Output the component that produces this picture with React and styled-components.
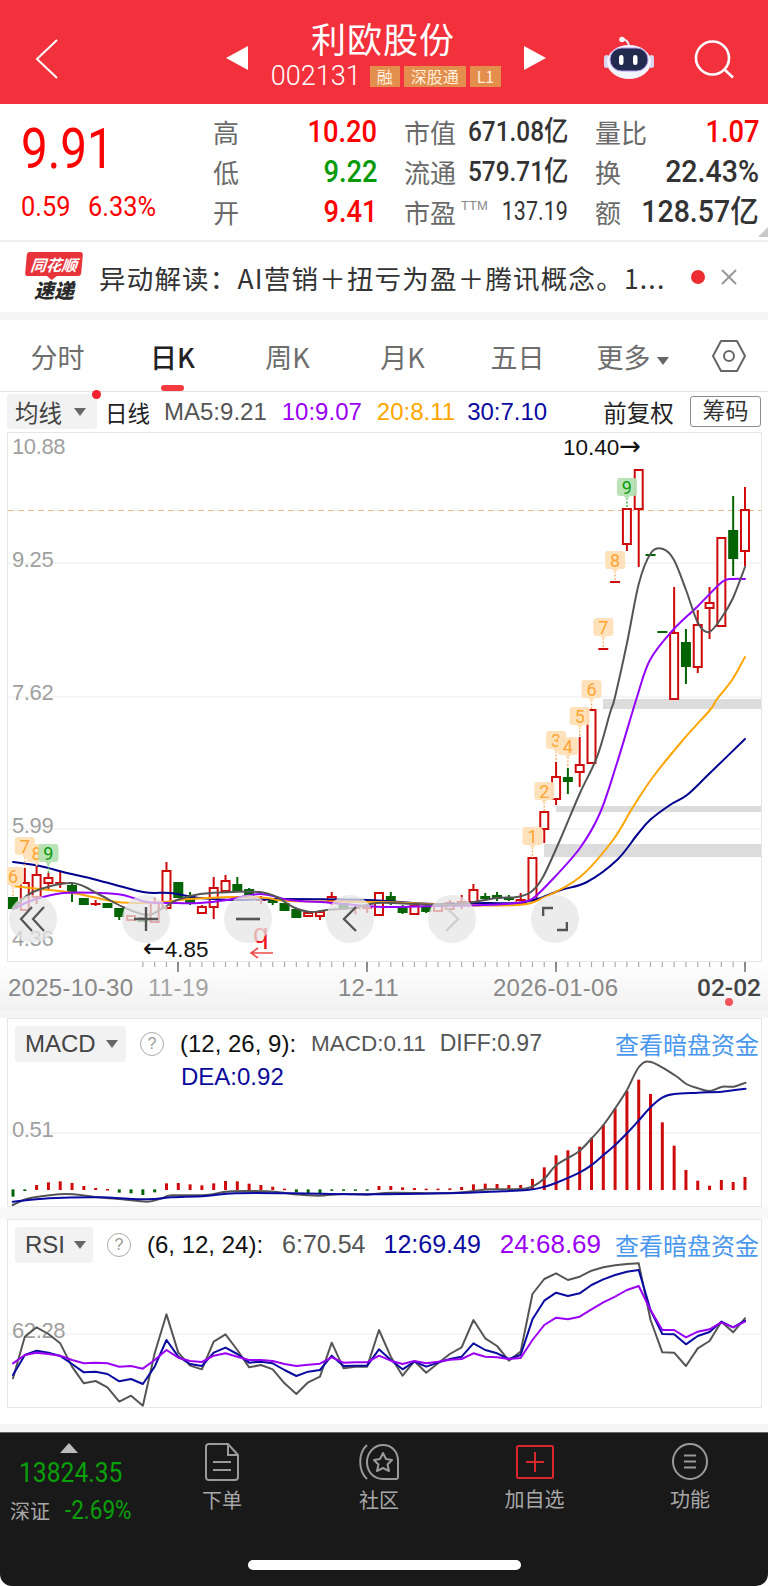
import React from "react";
import styled, { createGlobalStyle } from "styled-components";

const SANS = `"Liberation Sans", "Noto Sans CJK SC", sans-serif`;
const CJK = `"Noto Sans CJK SC", "Liberation Sans", sans-serif`;
const NARROW = `"Roboto", "Noto Sans CJK SC", sans-serif`;
const RED = "#fe0000";
const CANDLE_RED = "#cf0a0a";
const CANDLE_GREEN = "#046404";

const GlobalStyle = createGlobalStyle`
  html, body { margin: 0; padding: 0; background: #fff; }
  * { box-sizing: border-box; }
`;

const Page = styled.div`
  width: 768px;
  height: 1586px;
  display: flex;
  flex-direction: column;
  background: #fff;
  font-family: ${CJK};
  overflow: hidden;
`;

/* header */
const Header = styled.header`
  height: 104px;
  flex: none;
  background: #f2313c;
  display: grid;
  grid-template-columns: 226px 320px 1fr;
  color: #fff;
`;
const BackBtn = styled.div`
  padding: 39px 0 0 35px;
`;
const TitleWrap = styled.div`
  display: flex;
  align-items: flex-start;
  justify-content: space-between;
`;
const Arrow = styled.div`
  margin-top: 46px;
  width: 0;
  height: 0;
  border-top: 12px solid transparent;
  border-bottom: 12px solid transparent;
  ${(p) =>
    p.$right ? "border-left: 22px solid #fff;" : "border-right: 22px solid #fff;"}
`;
const TitleStack = styled.div`
  display: flex;
  flex-direction: column;
  align-items: center;
  padding-top: 15px;
`;
const Title = styled.div`
  font-size: 35px;
  line-height: 46px;
  letter-spacing: 1px;
  font-weight: 400;
  margin-right: 6px;
`;
const CodeRow = styled.div`
  display: flex;
  align-items: center;
  gap: 4px;
  height: 30px;
`;
const Code = styled.span`
  font-family: ${NARROW};
  font-size: 27px;
  font-weight: 300;
  margin-right: 5px;
`;
const Badge = styled.span`
  background: #e38e4c;
  color: #ffeedd;
  font-size: 16px;
  height: 21px;
  line-height: 21px;
  padding: 0 ${(p) => p.$pad || 7}px;
  font-family: ${CJK};
`;
const HeadRight = styled.div`
  display: flex;
  align-items: flex-start;
  padding: 36px 0 0 58px;
  gap: 40px;
`;
const SearchIcon = styled.svg`
  margin-top: 4px;
`;

/* quote */
const Quote = styled.section`
  height: 136px;
  flex: none;
  display: flex;
  position: relative;
`;
const PriceBlock = styled.div`
  width: 213px;
  padding: 17px 0 0 21px;
`;
const Price = styled.div`
  font-family: ${NARROW};
  color: ${RED};
  font-size: 56px;
  line-height: 56px;
  transform: scaleX(0.85);
  transform-origin: left center;
`;
const Change = styled.div`
  display: flex;
  gap: 14px;
  margin-top: 14px;
  font-family: ${NARROW};
  color: ${RED};
  font-size: 27px;
  line-height: 32px;
`;
const ChangeText = styled.span`
  display: inline-block;
  transform: scaleX(0.94);
  transform-origin: left center;
`;
const StatGrid = styled.div`
  padding-top: 8px;
  display: grid;
  grid-template-columns: repeat(3, 164px);
  grid-auto-rows: 40px;
  column-gap: 27px;
`;
const Stat = styled.div`
  display: grid;
  grid-template-columns: max-content minmax(0, 1fr);
  align-items: center;
`;
const StatLabel = styled.span`
  font-size: 26px;
  color: #6a6a6a;
  line-height: 40px;
  display: flex;
  align-items: flex-start;
  white-space: nowrap;
`;
const Ttm = styled.sup`
  font-family: ${SANS};
  font-size: 13px;
  line-height: 16px;
  color: #888;
  margin: 6px 0 0 5px;
  vertical-align: baseline;
`;
const StatValue = styled.span`
  justify-self: end;
  white-space: nowrap;
  font-family: ${NARROW};
  font-size: ${(p) => p.$size || 31}px;
  line-height: 40px;
  font-weight: ${(p) => p.$weight || 500};
  color: ${(p) => p.$color || "#333"};
  transform: scaleX(${(p) => p.$sx || 0.88});
  transform-origin: right center;
`;
const Corner = styled.div`
  position: absolute;
  right: 0;
  bottom: 3px;
  width: 0;
  height: 0;
  border-left: 10px solid transparent;
  border-bottom: 10px solid #c8c8c8;
`;

/* banner */
const Banner = styled.section`
  height: 72px;
  flex: none;
  border-top: 2px solid #efefef;
  display: flex;
  align-items: center;
  padding-left: 25px;
`;
const Logo = styled.div`
  width: 58px;
  display: flex;
  flex-direction: column;
  align-items: center;
`;
const LogoTop = styled.div`
  width: 56px;
  height: 24px;
  background: #e8333a;
  border-radius: 3px;
  transform: skewX(-5deg);
  color: #fff;
  font-size: 15.5px;
  font-weight: 700;
  font-style: italic;
  line-height: 24px;
  text-align: center;
  position: relative;
  &::after {
    content: "";
    position: absolute;
    left: 22px;
    bottom: -4px;
    border-left: 5px solid transparent;
    border-right: 5px solid transparent;
    border-top: 4px solid #e8333a;
  }
`;
const LogoBottom = styled.div`
  margin-top: 2px;
  color: #2a2a2a;
  font-size: 20px;
  line-height: 24px;
  font-weight: 900;
  font-style: italic;
`;
const BannerText = styled.div`
  margin-left: 16px;
  width: 575px;
  font-size: 26.5px;
  color: #333;
  white-space: nowrap;
  letter-spacing: 1.2px;
  font-family: ${CJK};
`;
const RedDot = styled.span`
  width: 14px;
  height: 14px;
  border-radius: 50%;
  background: #ec2e32;
  margin-left: 17px;
  flex: none;
`;
const CloseX = styled.div`
  margin-left: 15px;
  display: flex;
`;
const Band = styled.div`
  height: ${(p) => p.$h}px;
  flex: none;
  background: ${(p) => p.$bg || "#f5f5f5"};
`;

/* tabs */
const Tabs = styled.nav`
  height: 72px;
  flex: none;
  display: grid;
  grid-template-columns: repeat(6, 115px) 1fr;
  border-bottom: 1px solid #e4e4e4;
  align-items: center;
  position: relative;
`;
const Tab = styled.div`
  font-size: 27px;
  text-align: center;
  color: ${(p) => (p.$active ? "#222" : "#6e6e6e")};
  font-weight: ${(p) => (p.$active ? 500 : 400)};
  height: 72px;
  line-height: 74px;
  position: relative;
  &::after {
    content: ${(p) => (p.$active ? '""' : "none")};
    position: absolute;
    left: 46px;
    bottom: 1px;
    width: 23px;
    height: 6px;
    border-radius: 3px;
    background: #f43a3f;
  }
`;
const Caret = styled.i`
  display: inline-block;
  width: 0;
  height: 0;
  margin-left: ${(p) => p.$ml ?? 7}px;
  vertical-align: middle;
  border-left: ${(p) => p.$s || 6}px solid transparent;
  border-right: ${(p) => p.$s || 6}px solid transparent;
  border-top: ${(p) => (p.$s || 6) + 2}px solid #666;
`;
const HexWrap = styled.div`
  display: flex;
  justify-content: center;
`;

/* toolbar */
const Toolbar = styled.div`
  height: 40px;
  flex: none;
  display: flex;
  align-items: center;
  padding: 2px 7px 3px 7px;
  font-family: ${SANS};
  font-size: 24px;
  position: relative;
  &::before {
    content: "";
    position: absolute;
    left: 92px;
    top: -2px;
    width: 9px;
    height: 9px;
    border-radius: 50%;
    background: #f4212e;
  }
`;
const MaButton = styled.div`
  width: 90px;
  height: 35px;
  background: #f2f2f2;
  border-radius: 3px;
  color: #444;
  display: flex;
  align-items: center;
  padding-left: 8px;
  font-size: 23.5px;
`;
const ToolText = styled.span`
  color: ${(p) => p.$color || "#222"};
  margin-left: ${(p) => p.$ml || 0}px;
  font-size: ${(p) => p.$size || 24}px;
  white-space: nowrap;
`;
const ChipBtn = styled.div`
  margin-left: auto;
  width: 71px;
  height: 31px;
  border: 1px solid #8c8c8c;
  border-radius: 3px;
  text-align: center;
  line-height: 29px;
  font-size: 23px;
  color: #333;
`;

/* main chart */
const ChartFrame = styled.div`
  margin-left: 7px;
  width: 755px;
  height: 530px;
  flex: none;
  position: relative;
`;
const ChartSvg = styled.svg`
  display: block;
  width: 100%;
  height: 100%;
`;
const ScaleText = styled.text`
  font-family: ${SANS};
  font-size: ${(p) => p.$size || 22}px;
  letter-spacing: ${(p) => p.$ls ?? -0.4}px;
  fill: ${(p) => p.$fill || "#a0a0a0"};
`;
const AxisDate = styled.text`
  font-family: ${SANS};
  font-size: 24px;
  letter-spacing: 0.25px;
  fill: ${(p) => p.$fill || "#888"};
`;
const AxisDateNow = styled.text`
  font-family: ${NARROW};
  font-size: 24.500px;
  font-weight: 500;
  fill: #444;
`;
const ArrowGlyph = styled.tspan`
  font-family: "DejaVu Sans", sans-serif;
  font-size: 26px;
`;
const SignalText = styled.text`
  font-family: ${NARROW};
  font-size: 18px;
  text-anchor: middle;
`;
const RoundBtn = styled.div`
  position: absolute;
  left: ${(p) => p.$x - 7 - 24}px;
  top: 463px;
  width: 48px;
  height: 48px;
  border-radius: 50%;
  background: rgba(229, 229, 229, 0.74);
  display: flex;
  align-items: center;
  justify-content: center;
`;
const Axis = styled.div`
  height: 48px;
  flex: none;
  background: linear-gradient(#ffffff, #f1f1f1);
`;
const AxisSvg = styled.svg`
  display: block;
  width: 768px;
  height: 48px;
`;

/* indicator panels */
const Panel = styled.section`
  margin-left: 7px;
  width: 755px;
  height: 189px;
  flex: none;
  border: 1px solid #e6e6e6;
  display: grid;
  font-family: ${SANS};
  & > * {
    grid-area: 1 / 1;
  }
`;
const PanelHead = styled.div`
  padding: 6px 2px 0 7px;
  position: relative;
`;
const PanelRow = styled.div`
  display: flex;
  align-items: center;
  height: 37px;
  font-size: 24px;
`;
const IndicatorBtn = styled.div`
  width: ${(p) => p.$w}px;
  height: 36px;
  background: #f2f2f2;
  border-radius: 3px;
  display: flex;
  align-items: center;
  padding-left: 10px;
  color: #444;
  flex: none;
`;
const HelpMark = styled.span`
  flex: none;
  margin-left: 14px;
  width: 24px;
  height: 24px;
  border: 1.5px solid #aaa;
  border-radius: 50%;
  color: #999;
  font-size: 16px;
  line-height: 21px;
  text-align: center;
`;
const PanelText = styled.span`
  color: ${(p) => p.$color || "#555"};
  margin-left: ${(p) => p.$ml || 0}px;
  font-size: ${(p) => p.$size || 24}px;
  white-space: nowrap;
`;
const DarkLink = styled.span`
  margin-left: auto;
  color: #4a98ee;
  font-size: 24px;
  font-family: ${CJK};
  white-space: nowrap;
`;
const DeaRow = styled.div`
  padding-left: 166px;
  font-size: 24px;
  line-height: 30px;
  color: #0a0a9c;
`;

/* bottom bar */
const BottomBar = styled.footer`
  height: 154px;
  flex: none;
  background: #191919;
  border-top: 1px solid #666;
  border-radius: 0 0 12px 12px;
  display: flex;
  flex-direction: column;
  color: #a8a8a8;
`;
const BarGrid = styled.div`
  display: grid;
  grid-template-columns: 143px 158px 156px 155px 156px;
  height: 127px;
`;
const IndexBlock = styled.div`
  padding: 10px 0 0 10px;
  display: flex;
  flex-direction: column;
  position: relative;
`;
const UpTri = styled.div`
  width: 0;
  height: 0;
  margin: 0 0 0 50px;
  border-left: 9px solid transparent;
  border-right: 9px solid transparent;
  border-bottom: 10px solid #bbb;
`;
const IndexNum = styled.div`
  font-family: ${NARROW};
  font-size: 28px;
  line-height: 34px;
  color: #0aa00a;
  margin: 3px 0 0 9px;
  transform: scaleX(0.88);
  transform-origin: left center;
`;
const IndexRow = styled.div`
  display: flex;
  align-items: center;
  margin-top: 6px;
  font-size: 20px;
  line-height: 30px;
`;
const IndexPct = styled.span`
  font-family: ${NARROW};
  font-size: 25px;
  color: #0aa00a;
  margin-left: 15px;
  transform: scaleX(0.9);
  transform-origin: left center;
`;
const BarItem = styled.div`
  display: flex;
  flex-direction: column;
  align-items: center;
  padding-top: ${(p) => p.$top || 10}px;
`;
const BarLabel = styled.span`
  margin-top: ${(p) => p.$mt || 5}px;
  font-size: 20px;
  line-height: 28px;
`;
const HomeBar = styled.div`
  align-self: center;
  width: 273px;
  height: 10px;
  border-radius: 5px;
  background: #fff;
`;

/* chart data, all in page pixels */
const cx = (i) => 13 + i * 11.806;
const zx = (z) => z / 2.04;

const candles = [
  [0, 897, 909, 897, 909, "g"], [1, 883, 910, 868, 910, "r"], [2, 875, 897, 866, 904, "r"],
  [3, 878, 883, 873, 890, "r"], [4, 882, 884, 872, 888, "r"], [5, 885, 892, 883, 902, "g"],
  [6, 898, 905, 898, 905, "g"], [7, 903, 905, 900, 906, "r"], [8, 903, 908, 903, 908, "g"],
  [9, 908, 917, 908, 920, "g"], [10, 916, 920, 916, 920, "r"], [11, 917, 922, 917, 922, "g"],
  [12, 903, 922, 897, 922, "r"], [13, 871, 908, 862, 910, "r"], [14, 882, 898, 882, 898, "g"],
  [15, 895, 903, 892, 905, "g"], [16, 907, 913, 905, 914, "r"], [17, 888, 907, 877, 919, "r"],
  [18, 881, 891, 875, 893, "r"], [19, 884, 891, 877, 892, "g"], [20, 889, 896, 888, 898, "g"],
  [21, 899, 900, 896, 904, "r"], [22, 898, 903, 898, 905, "g"], [23, 903, 911, 903, 911, "g"],
  [24, 909, 918, 909, 918, "g"], [25, 913, 916, 912, 917, "r"], [26, 912, 916, 910, 920, "r"],
  [27, 897, 900, 892, 905, "r"], [28, 903, 909, 903, 909, "g"], [29, 907, 909, 905, 914, "r"],
  [30, 907, 909, 905, 913, "r"], [31, 893, 915, 892, 916, "r"], [32, 896, 903, 892, 905, "g"],
  [33, 906, 913, 905, 914, "g"], [34, 906, 914, 905, 915, "r"], [35, 907, 912, 905, 913, "g"],
  [36, 905, 911, 903, 912, "r"], [37, 903, 909, 900, 912, "r"], [38, 902, 905, 895, 909, "r"],
  [39, 890, 902, 884, 903, "r"], [40, 896, 899, 893, 901, "g"], [41, 895, 899, 892, 901, "g"],
  [42, 897, 900, 895, 901, "g"], [43, 900, 903, 893, 904, "r"], [44, 858, 900, 858, 902, "r"],
  [45, 812, 829, 812, 843, "r"], [46, 777, 799, 762, 805, "r"], [47, 777, 782, 768, 794, "g"],
  [48, 765, 772, 737, 787, "r"], [49, 710, 763, 710, 763, "r"], [50, 648, 650, 648, 650, "r"],
  [51, 581, 583, 581, 583, "r"], [52, 509, 544, 509, 551, "r"], [53, 470, 509, 470, 567, "r"],
  [54, 554, 556, 554, 556, "g"], [55, 631, 633, 631, 633, "g"], [56, 633, 699, 587, 699, "r"],
  [57, 642, 667, 629, 684, "g"], [58, 625, 667, 610, 673, "r"], [59, 603, 608, 587, 639, "r"],
  [60, 538, 626, 538, 626, "r"], [61, 530, 559, 496, 576, "g"], [62, 510, 551, 487, 566, "r"],
];

const ma5 = "13,909 33,892 72,883 100,895 123,907 147,915 163,908 177,900 200,894 233,892 260,892 277,897 293,907 310,912 327,910 353,908 377,903 417,904 451,905 474,902 497,898 517,897 531,892 543,877 560,840 580,793 597,757 610,713 615,697 627,643 639,583 651,553 663,549 674,560 686,590 698,623 709,632 722,617 733,598 745,567";
const ma10 = "13,909 33,900 63,893 100,893 123,895 147,902 173,903 200,903 227,900 260,894 290,900 333,903 383,907 434,906 484,905 517,903 532,899 550,882 580,848 600,813 617,763 637,697 650,660 673,630 697,607 722,582 733,579 745,579";
const ma20 = "13,886 40,889 67,892 93,897 117,902 143,903 163,902 190,899 233,897 267,898 290,901 383,902 451,905 517,905 543,898 580,877 613,840 633,807 653,777 683,740 710,710 717,699 732,680 745,657";
const ma30 = "13,862 40,866 67,873 97,880 143,892 170,893 200,898 233,900 283,899 367,900 434,904 484,903 517,903 537,899 561,890 587,882 617,860 637,835 650,820 670,805 687,795 710,773 745,739";

const signals = [
  [1, 837, 7, 868], [2, 844, 8, 866], [3, 844, 9, 873, true], [0, 867, 6, 897],
  [44, 827, 1, 858], [45, 782, 2, 812], [46, 731, 3, 762], [47, 737, 4, 768], [48, 707, 5, 737],
  [49, 680, 6, 710], [50, 618, 7, 648], [51, 551, 8, 581], [52, 478, 9, 509, true],
];

const gapBars = [[603, 699, 10], [556, 806, 6], [544, 844, 13]];

const macdTops = [560, 543, 525, 517, 514, 519, 528, 534, 537, 548, 550, 555, 547, 520, 519, 523, 526, 520, 513, 514, 521, 525, 530, 536, 547, 550, 550, 542, 542, 542, 540, 528, 528, 532, 534, 536, 536, 535, 531, 523, 521, 522, 525, 525, 507, 472, 436, 421, 410, 383, 344, 296, 243, 209, 252, 337, 407, 480, 512, 527, 510, 516, 501];
const macdGreen = new Set([0, 1, 9, 10, 11, 12, 24, 25, 26, 27, 28, 29, 30]);
const macdGray = [[26, 585], [60, 565], [120, 553], [150, 553], [200, 562], [250, 568], [300, 575], [330, 565], [350, 556], [420, 555], [460, 545], [500, 543], [560, 545], [600, 553], [650, 557], [700, 552], [750, 554], [800, 548], [900, 550], [950, 546], [1000, 538], [1075, 535], [1111, 505], [1135, 465], [1180, 425], [1207, 385], [1231, 345], [1255, 295], [1279, 240], [1304, 170], [1328, 156], [1376, 195], [1400, 222], [1424, 235], [1448, 243], [1473, 230], [1497, 230], [1521, 218]];
const macdNavy = [[26, 575], [100, 565], [200, 562], [300, 568], [350, 562], [420, 558], [480, 550], [600, 550], [750, 553], [900, 550], [1000, 545], [1075, 540], [1111, 530], [1135, 518], [1183, 487], [1207, 465], [1231, 435], [1255, 405], [1279, 370], [1304, 330], [1328, 290], [1352, 262], [1376, 252], [1424, 248], [1473, 245], [1521, 236]];

const rsiGray = [505, 380, 352, 372, 400, 470, 520, 513, 532, 575, 557, 587, 430, 313, 428, 467, 478, 395, 373, 420, 472, 465, 478, 520, 552, 517, 500, 398, 475, 470, 470, 360, 440, 497, 453, 488, 460, 432, 412, 330, 385, 408, 452, 425, 252, 207, 190, 210, 200, 182, 172, 166, 162, 160, 330, 427, 428, 468, 415, 393, 335, 367, 325];
const rsiNavy = [495, 435, 422, 428, 438, 462, 487, 485, 492, 514, 507, 522, 470, 390, 440, 462, 468, 428, 413, 432, 458, 455, 460, 480, 498, 485, 480, 437, 468, 467, 467, 418, 450, 478, 455, 470, 458, 447, 440, 400, 420, 430, 447, 435, 328, 272, 248, 258, 250, 225, 208, 195, 185, 180, 300, 372, 373, 403, 378, 366, 335, 352, 332];
const rsiPurple = [460, 435, 428, 432, 437, 450, 460, 458, 460, 470, 468, 476, 450, 420, 443, 453, 456, 437, 430, 440, 450, 450, 453, 462, 468, 464, 461, 442, 458, 457, 457, 437, 452, 462, 453, 460, 455, 449, 447, 430, 440, 442, 447, 444, 390, 345, 323, 328, 320, 298, 277, 260, 240, 228, 300, 360, 360, 382, 365, 358, 337, 352, 335];

const rsiLine = (vals) => vals.map((v, i) => `${cx(i)},${1210 + v / 3}`).join(" ");
const macdLine = (pts) => pts.map(([x, y]) => `${zx(x)},${1010 + y / 3}`).join(" ");

// catmull-rom through the read-off points so the averages stay round
function smooth(str) {
  const p = str.split(" ").map((s) => s.split(",").map(Number));
  let d = `M${p[0][0]} ${p[0][1]}`;
  for (let i = 0; i < p.length - 1; i++) {
    const a = p[i - 1] || p[i];
    const b = p[i];
    const c = p[i + 1];
    const e = p[i + 2] || c;
    const c1 = [b[0] + (c[0] - a[0]) / 6, b[1] + (c[1] - a[1]) / 6];
    const c2 = [c[0] - (e[0] - b[0]) / 6, c[1] - (e[1] - b[1]) / 6];
    d += `C${c1[0].toFixed(1)} ${c1[1].toFixed(1)} ${c2[0].toFixed(1)} ${c2[1].toFixed(1)} ${c[0].toFixed(1)} ${c[1].toFixed(1)}`;
  }
  return d;
}

function Line({ points, color, w = 2 }) {
  return <polyline points={points} fill="none" stroke={color} strokeWidth={w} strokeLinejoin="round" strokeLinecap="round" />;
}

function Curve({ points, color, w = 2 }) {
  return <path d={smooth(points)} fill="none" stroke={color} strokeWidth={w} strokeLinecap="round" />;
}

function Candle({ c }) {
  const [i, top, bottom, hi, lo, kind] = c;
  const x = cx(i);
  const color = kind === "r" ? CANDLE_RED : CANDLE_GREEN;
  const flat = bottom - top <= 2;
  return (
    <g>
      <line x1={x} x2={x} y1={hi} y2={lo} stroke={color} strokeWidth="2" />
      {flat ? (
        <line x1={x - 5} x2={x + 5} y1={top + 1} y2={top + 1} stroke={color} strokeWidth="2" />
      ) : kind === "r" ? (
        <rect x={x - 4} y={top} width="8" height={bottom - top} fill="#fff" stroke={color} strokeWidth="2" />
      ) : (
        <rect x={x - 5} y={top} width="10" height={bottom - top} fill={color} />
      )}
    </g>
  );
}

function Signal({ s }) {
  const [i, y, n, target, green] = [s[0], s[1], s[2], s[3], s[4]];
  const x = cx(i);
  const bg = green ? "#b5e1b3" : "#ffe0b8";
  const stem = green ? "#3fb04a" : "#f3b26b";
  const ink = green ? "#0a9a0a" : "#ffa531";
  return (
    <g>
      <line x1={x} x2={x} y1={y + 20} y2={target} stroke={stem} strokeWidth="1.4" strokeDasharray="2 1.5" />
      <rect x={x - 10} y={y} width="20" height="18" rx="3" fill={bg} opacity="0.95" />
      <path d={`M${x - 3} ${y + 18}L${x} ${y + 22}L${x + 3} ${y + 18}Z`} fill={bg} />
      <SignalText x={x} y={y + 15.500} fill={ink}>{n}</SignalText>
    </g>
  );
}

function MainChart() {
  return (
    <ChartSvg viewBox="7 432 755 530">
      <rect x="7.5" y="432.5" width="754" height="529" fill="#fff" stroke="#e6e6e6" />
      {[563, 697, 829].map((y) => (
        <line key={y} x1="8" x2="761" y1={y} y2={y} stroke="#ececec" />
      ))}
      {gapBars.map(([x, y, h]) => (
        <rect key={y} x={x} y={y} width={761 - x} height={h} fill="#dcdcdc" />
      ))}
      <line x1="8" x2="761" y1="510.5" y2="510.5" stroke="#e9b98b" strokeDasharray="6 4" />
      <ScaleText x="12" y="454">10.88</ScaleText>
      <ScaleText x="12" y="567">9.25</ScaleText>
      <ScaleText x="12" y="700">7.62</ScaleText>
      <ScaleText x="12" y="833">5.99</ScaleText>
      <ScaleText x="12" y="946">4.36</ScaleText>
      {candles.map((c) => (
        <Candle key={c[0]} c={c} />
      ))}
      <Curve points={ma30} color="#00008f" />
      <Curve points={ma20} color="#ffa500" />
      <Curve points={ma10} color="#9400ff" />
      <Curve points={ma5} color="#555555" />
      {signals.map((s) => (
        <Signal key={`${s[0]}-${s[2]}`} s={s} />
      ))}
      <ScaleText x="143" y="957" $size={22.5} $ls={0} $fill="#111"><ArrowGlyph>←</ArrowGlyph>4.85</ScaleText>
      <ScaleText x="563" y="455" $size={22.5} $ls={0} $fill="#111">10.40<ArrowGlyph>→</ArrowGlyph></ScaleText>
      <ScaleText x="253" y="943" $size={28} $ls={0} $fill="#f01818">q</ScaleText>
      <path d="M273 953H251M258 948l-7 5 7 5" fill="none" stroke="#f04a4a" strokeWidth="1.6" />
    </ChartSvg>
  );
}

function AxisRow() {
  const minor = [];
  for (let i = 11; i < 63; i++) minor.push(cx(i));
  return (
    <AxisSvg viewBox="0 962 768 48">
      {minor.map((x) => (
        <line key={x} x1={x} x2={x} y1="962" y2="967" stroke="#aaa" strokeWidth="1.2" />
      ))}
      {[178, 367, 556, 745].map((x) => (
        <line key={x} x1={x} x2={x} y1="962" y2="972" stroke="#777" strokeWidth="1.6" />
      ))}
      <AxisDate x="8" y="996">2025-10-30</AxisDate>
      <AxisDate x="148" y="996" $fill="#a4a4a4">11-19</AxisDate>
      <AxisDate x="338" y="996">12-11</AxisDate>
      <AxisDate x="493" y="996">2026-01-06</AxisDate>
      <AxisDateNow x="697" y="996">02-02</AxisDateNow>
      <circle cx="729" cy="1002" r="4" fill="#f2545b" />
    </AxisSvg>
  );
}

function MacdPanel() {
  return (
    <Panel>
      <ChartSvg viewBox="8 1019 753 187">
        <line x1="8" x2="761" y1="1133" y2="1133" stroke="#ececec" />
        <ScaleText x="12" y="1137">0.51</ScaleText>
        {macdTops.map((t, i) => {
          const green = macdGreen.has(i);
          const y1 = green ? 1010 + 538 / 3 : 1010 + t / 3;
          const y2 = green ? 1010 + t / 3 : 1190;
          return <line key={i} x1={cx(i)} x2={cx(i)} y1={y1} y2={Math.max(y2, y1 + 1.5)} stroke={green ? CANDLE_GREEN : CANDLE_RED} strokeWidth="3" />;
        })}
        <Curve points={macdLine(macdGray)} color="#555" />
        <Curve points={macdLine(macdNavy)} color="#0a0aa0" />
      </ChartSvg>
      <PanelHead>
        <PanelRow>
          <IndicatorBtn $w={111}>
            MACD<Caret $ml={10} $s={6} />
          </IndicatorBtn>
          <HelpMark>?</HelpMark>
          <PanelText $color="#111" $ml={16}>(12, 26, 9):</PanelText>
          <PanelText $ml={15} $size={22.5}>MACD:0.11</PanelText>
          <PanelText $ml={14} $size={23}>DIFF:0.97</PanelText>
          <DarkLink>查看暗盘资金</DarkLink>
        </PanelRow>
        <DeaRow>DEA:0.92</DeaRow>
      </PanelHead>
    </Panel>
  );
}

function RsiPanel() {
  return (
    <Panel>
      <ChartSvg viewBox="8 1220 753 187">
        <line x1="8" x2="761" y1="1334" y2="1334" stroke="#ececec" />
        <ScaleText x="12" y="1338">62.28</ScaleText>
        <Line points={rsiLine(rsiGray)} color="#555" />
        <Line points={rsiLine(rsiNavy)} color="#0a0aa0" />
        <Line points={rsiLine(rsiPurple)} color="#9b00f5" />
      </ChartSvg>
      <PanelHead>
        <PanelRow>
          <IndicatorBtn $w={78}>
            RSI<Caret $ml={9} $s={6} />
          </IndicatorBtn>
          <HelpMark>?</HelpMark>
          <PanelText $color="#111" $ml={16}>(6, 12, 24):</PanelText>
          <PanelText $ml={19} $size={25}>6:70.54</PanelText>
          <PanelText $ml={18} $size={25} $color="#0a0aa0">12:69.49</PanelText>
          <PanelText $ml={19} $size={26} $color="#9b00f5">24:68.69</PanelText>
          <DarkLink>查看暗盘资金</DarkLink>
        </PanelRow>
      </PanelHead>
    </Panel>
  );
}

const RobotIcon = () => (
  <svg width="50" height="43" viewBox="0 0 50 43">
    <path d="M18 3.500C22 3 25 6 25 11" fill="none" stroke="#ecebf8" strokeWidth="2" />
    <circle cx="18" cy="3.500" r="2.800" fill="#f4f4fb" />
    <rect x="0" y="19" width="5" height="13" rx="2.500" fill="#d9d6f0" />
    <rect x="45" y="19" width="5" height="13" rx="2.500" fill="#d9d6f0" />
    <ellipse cx="25" cy="26" rx="22" ry="17" fill="#f3f3fb" />
    <rect x="6" y="12" width="38" height="23" rx="11.500" fill="#222b4d" stroke="#b79cf0" strokeWidth="1" />
    <rect x="15" y="19" width="4.500" height="10" rx="2.200" fill="#fff" />
    <rect x="29" y="19" width="4.500" height="10" rx="2.200" fill="#fff" />
  </svg>
);

const GearIcon = () => (
  <svg width="36" height="34" viewBox="0 0 36 34">
    <path d="M10 2H26L34 17L26 32H10L2 17Z" fill="none" stroke="#666" strokeWidth="2" strokeLinejoin="round" />
    <circle cx="18" cy="17" r="5" fill="none" stroke="#666" strokeWidth="2" />
  </svg>
);

export default function App() {
  return (
    <Page>
      <GlobalStyle />
      <Header>
        <BackBtn>
          <svg width="24" height="40" viewBox="0 0 24 40">
            <path d="M22 1L2 20L22 39" fill="none" stroke="#fff" strokeWidth="2" />
          </svg>
        </BackBtn>
        <TitleWrap>
          <Arrow />
          <TitleStack>
            <Title>利欧股份</Title>
            <CodeRow>
              <Code>002131</Code>
              <Badge>融</Badge>
              <Badge $pad={7}>深股通</Badge>
              <Badge $pad={7}>L1</Badge>
            </CodeRow>
          </TitleStack>
          <Arrow $right />
        </TitleWrap>
        <HeadRight>
          <RobotIcon />
          <SearchIcon width="41" height="40" viewBox="0 0 41 40">
            <circle cx="18.500" cy="18" r="16.500" fill="none" stroke="#fff" strokeWidth="2.6" />
            <path d="M31 30L39 37.500" stroke="#fff" strokeWidth="2.6" />
          </SearchIcon>
        </HeadRight>
      </Header>

      <Quote>
        <PriceBlock>
          <Price>9.91</Price>
          <Change>
            <ChangeText>0.59</ChangeText>
            <ChangeText>6.33%</ChangeText>
          </Change>
        </PriceBlock>
        <StatGrid>
          <Stat>
            <StatLabel>高</StatLabel>
            <StatValue $color={RED}>10.20</StatValue>
          </Stat>
          <Stat>
            <StatLabel>市值</StatLabel>
            <StatValue $size={28} $sx={0.87}>671.08亿</StatValue>
          </Stat>
          <Stat>
            <StatLabel>量比</StatLabel>
            <StatValue $color={RED}>1.07</StatValue>
          </Stat>
          <Stat>
            <StatLabel>低</StatLabel>
            <StatValue $color="#089a08">9.22</StatValue>
          </Stat>
          <Stat>
            <StatLabel>流通</StatLabel>
            <StatValue $size={28} $sx={0.87}>579.71亿</StatValue>
          </Stat>
          <Stat>
            <StatLabel>换</StatLabel>
            <StatValue $sx={0.92}>22.43%</StatValue>
          </Stat>
          <Stat>
            <StatLabel>开</StatLabel>
            <StatValue $color={RED}>9.41</StatValue>
          </Stat>
          <Stat>
            <StatLabel>
              市盈<Ttm>TTM</Ttm>
            </StatLabel>
            <StatValue $size={25} $sx={0.86} $weight={400}>137.19</StatValue>
          </Stat>
          <Stat>
            <StatLabel>额</StatLabel>
            <StatValue $sx={0.92}>128.57亿</StatValue>
          </Stat>
        </StatGrid>
        <Corner />
      </Quote>

      <Banner>
        <Logo>
          <LogoTop>同花顺</LogoTop>
          <LogoBottom>速递</LogoBottom>
        </Logo>
        <BannerText>异动解读：AI营销＋扭亏为盈＋腾讯概念。1...</BannerText>
        <RedDot />
        <CloseX>
          <svg width="18" height="18" viewBox="0 0 18 18">
            <path d="M2 2L16 16M16 2L2 16" stroke="#999" strokeWidth="2" />
          </svg>
        </CloseX>
      </Banner>
      <Band $h={8} />

      <Tabs>
        <Tab>分时</Tab>
        <Tab $active>日K</Tab>
        <Tab>周K</Tab>
        <Tab>月K</Tab>
        <Tab>五日</Tab>
        <Tab>
          更多<Caret $ml={6} $s={6} />
        </Tab>
        <HexWrap>
          <GearIcon />
        </HexWrap>
      </Tabs>

      <Toolbar>
        <MaButton>
          均线<Caret $ml={12} $s={6} />
        </MaButton>
        <ToolText $ml={8} $size={22.5}>日线</ToolText>
        <ToolText $ml={14} $color="#555">MA5:9.21</ToolText>
        <ToolText $ml={15} $color="#9b00f5">10:9.07</ToolText>
        <ToolText $ml={15} $color="#ffa500">20:8.11</ToolText>
        <ToolText $ml={12} $color="#0a0aa0">30:7.10</ToolText>
        <ToolText $ml={56} $size={23.5}>前复权</ToolText>
        <ChipBtn>筹码</ChipBtn>
      </Toolbar>

      <ChartFrame>
        <MainChart />
        <RoundBtn $x={33}>
          <svg width="28" height="26" viewBox="0 0 28 26">
            <path d="M13 1L2 13L13 25M25 1L14 13L25 25" fill="none" stroke="#555" strokeWidth="2.2" />
          </svg>
        </RoundBtn>
        <RoundBtn $x={146}>
          <svg width="24" height="24" viewBox="0 0 24 24">
            <path d="M0 12H24M12 0V24" fill="none" stroke="#555" strokeWidth="2.4" />
          </svg>
        </RoundBtn>
        <RoundBtn $x={248}>
          <svg width="24" height="4" viewBox="0 0 24 4">
            <path d="M0 2H24" stroke="#555" strokeWidth="2.6" />
          </svg>
        </RoundBtn>
        <RoundBtn $x={350}>
          <svg width="16" height="26" viewBox="0 0 16 26">
            <path d="M14 1L2 13L14 25" fill="none" stroke="#555" strokeWidth="2.4" />
          </svg>
        </RoundBtn>
        <RoundBtn $x={452}>
          <svg width="16" height="26" viewBox="0 0 16 26">
            <path d="M2 1L14 13L2 25" fill="none" stroke="#cfcfcf" strokeWidth="2.4" />
          </svg>
        </RoundBtn>
        <RoundBtn $x={555}>
          <svg width="26" height="26" viewBox="0 0 26 26">
            <path d="M1 10V2H11M25 16V24H15" fill="none" stroke="#555" strokeWidth="2.6" />
          </svg>
        </RoundBtn>
      </ChartFrame>

      <Axis>
        <AxisRow />
      </Axis>
      <Band $h={8} />
      <MacdPanel />
      <Band $h={12} $bg="#f8f8f8" />
      <RsiPanel />
      <Band $h={16} $bg="#fff" />
      <Band $h={8} />

      <BottomBar>
        <BarGrid>
          <IndexBlock>
            <UpTri />
            <IndexNum>13824.35</IndexNum>
            <IndexRow>
              深证
              <IndexPct>-2.69%</IndexPct>
            </IndexRow>
          </IndexBlock>
          <BarItem>
            <svg width="35" height="38" viewBox="0 0 35 38">
              <path d="M4 1H23L33 12V34a3 3 0 0 1-3 3H4a3 3 0 0 1-3-3V4a3 3 0 0 1 3-3ZM23 1V12H33M8 19H26M8 27H26" fill="none" stroke="#9a9a9a" strokeWidth="2" />
            </svg>
            <BarLabel>下单</BarLabel>
          </BarItem>
          <BarItem>
            <svg width="41" height="38" viewBox="0 0 41 38">
              <path d="M8 2C-1 10-1 28 8 36" fill="none" stroke="#9a9a9a" strokeWidth="2" />
              <path d="M24 2C33 2 39 9 39 18V34a2 2 0 0 1-2 2H24C14 36 8 28 8 19S15 2 24 2Z" fill="none" stroke="#9a9a9a" strokeWidth="2" />
              <path d="M24 10L27 16L33 17L28.500 21.500L30 28L24 25L18 28L19.500 21.500L15 17L21 16Z" fill="none" stroke="#9a9a9a" strokeWidth="2" strokeLinejoin="round" />
            </svg>
            <BarLabel>社区</BarLabel>
          </BarItem>
          <BarItem $top={12}>
            <svg width="38" height="34" viewBox="0 0 38 34">
              <rect x="1" y="1" width="36" height="32" rx="1.5" fill="none" stroke="#d8272d" strokeWidth="2" />
              <path d="M10 17H28M19 7V27" stroke="#d8272d" strokeWidth="2" />
            </svg>
            <BarLabel $mt={6}>加自选</BarLabel>
          </BarItem>
          <BarItem>
            <svg width="36" height="37" viewBox="0 0 36 37">
              <ellipse cx="18" cy="18.500" rx="17" ry="17.500" fill="none" stroke="#9a9a9a" strokeWidth="2" />
              <path d="M12 12.500H24M12 18.500H24M12 24.500H24" stroke="#9a9a9a" strokeWidth="2.2" />
            </svg>
            <BarLabel>功能</BarLabel>
          </BarItem>
        </BarGrid>
        <HomeBar />
      </BottomBar>
    </Page>
  );
}
